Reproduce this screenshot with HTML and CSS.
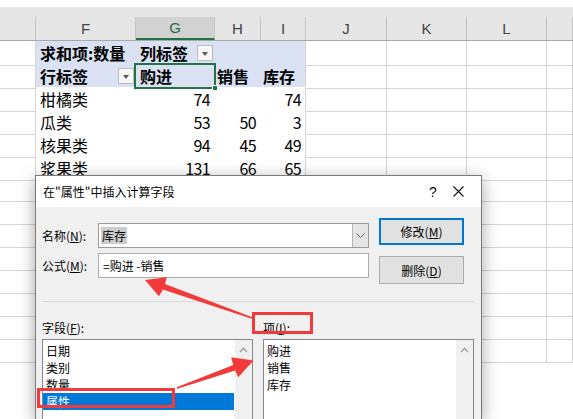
FILE: index.html
```html
<!DOCTYPE html>
<html lang="zh-CN">
<head>
<meta charset="utf-8">
<title>插入计算字段</title>
<link rel="stylesheet" href="styles.css">
</head>
<body>
<div class="sheet">
  <div class="topstrip"></div>
  <div class="colhead">
    <div class="h"></div><div class="h">F</div><div class="h sel">G</div><div class="h">H</div><div class="h">I</div><div class="h">J</div><div class="h">K</div><div class="h">L</div><div class="h"></div>
  </div>
  <div class="row">
    <div class="c"></div>
    <div class="c ph b">求和项:数量</div>
    <div class="c ph b dd-cell">列标签<span class="dd"></span></div>
    <div class="c ph"></div>
    <div class="c ph ri"></div>
    <div class="c"></div><div class="c"></div><div class="c"></div><div class="c"></div>
  </div>
  <div class="row">
    <div class="c"></div>
    <div class="c ph b bl dd-cell">行标签<span class="dd"></span></div>
    <div class="c ph b bl">购进</div>
    <div class="c ph b bl sh">销售</div>
    <div class="c ph b bl ri sh">库存</div>
    <div class="c"></div><div class="c"></div><div class="c"></div><div class="c"></div>
  </div>
  <div class="row">
    <div class="c"></div>
    <div class="c p">柑橘类</div><div class="c p n">74</div><div class="c p n"></div><div class="c p n ri">74</div>
    <div class="c"></div><div class="c"></div><div class="c"></div><div class="c"></div>
  </div>
  <div class="row">
    <div class="c"></div>
    <div class="c p">瓜类</div><div class="c p n">53</div><div class="c p n">50</div><div class="c p n ri">3</div>
    <div class="c"></div><div class="c"></div><div class="c"></div><div class="c"></div>
  </div>
  <div class="row">
    <div class="c"></div>
    <div class="c p">核果类</div><div class="c p n">94</div><div class="c p n">45</div><div class="c p n ri">49</div>
    <div class="c"></div><div class="c"></div><div class="c"></div><div class="c"></div>
  </div>
  <div class="row">
    <div class="c"></div>
    <div class="c p">浆果类</div><div class="c p n">131</div><div class="c p n">66</div><div class="c p n ri">65</div>
    <div class="c"></div><div class="c"></div><div class="c"></div><div class="c"></div>
  </div>
  <div class="row"><div class="c"></div><div class="c"></div><div class="c"></div><div class="c"></div><div class="c"></div><div class="c"></div><div class="c"></div><div class="c"></div><div class="c"></div></div>
  <div class="row"><div class="c"></div><div class="c"></div><div class="c"></div><div class="c"></div><div class="c"></div><div class="c"></div><div class="c"></div><div class="c"></div><div class="c"></div></div>
  <div class="row"><div class="c"></div><div class="c"></div><div class="c"></div><div class="c"></div><div class="c"></div><div class="c"></div><div class="c"></div><div class="c"></div><div class="c"></div></div>
  <div class="row"><div class="c"></div><div class="c"></div><div class="c"></div><div class="c"></div><div class="c"></div><div class="c"></div><div class="c"></div><div class="c"></div><div class="c"></div></div>
  <div class="row"><div class="c"></div><div class="c"></div><div class="c"></div><div class="c"></div><div class="c"></div><div class="c"></div><div class="c"></div><div class="c"></div><div class="c"></div></div>
  <div class="row"><div class="c"></div><div class="c"></div><div class="c"></div><div class="c"></div><div class="c"></div><div class="c"></div><div class="c"></div><div class="c"></div><div class="c"></div></div>
  <div class="row"><div class="c"></div><div class="c"></div><div class="c"></div><div class="c"></div><div class="c"></div><div class="c"></div><div class="c"></div><div class="c"></div><div class="c"></div></div>
  <div class="row"><div class="c"></div><div class="c"></div><div class="c"></div><div class="c"></div><div class="c"></div><div class="c"></div><div class="c"></div><div class="c"></div><div class="c"></div></div>
</div>
<div class="selbox"></div>
<div class="selhandle"></div>

<div class="dlg">
  <div class="title">
    <span class="tt">在"属性"中插入计算字段</span>
    <span class="q">?</span>
    <span class="x"><svg width="11" height="11" viewBox="0 0 11 11"><path d="M0.5 0.5 L10.5 10.5 M10.5 0.5 L0.5 10.5" stroke="#111" stroke-width="1.1" fill="none"/></svg></span>
  </div>
  <div class="body">
    <div class="top">
      <div class="fields">
        <div class="frow">
          <span class="lbl">名称(<u>N</u>):</span>
          <div class="combo"><span class="ctext"><span class="hl">库存</span></span><span class="cdrop"><svg width="9" height="5" viewBox="0 0 9 5"><path d="M0.5 0.5 L4.5 4.5 L8.5 0.5" stroke="#606060" stroke-width="1" fill="none"/></svg></span></div>
        </div>
        <div class="frow">
          <span class="lbl">公式(<u>M</u>):</span>
          <div class="input">=购进 -销售</div>
        </div>
      </div>
      <div class="btns">
        <div class="btn primary">修改(<u>M</u>)</div>
        <div class="btn second">删除(<u>D</u>)</div>
      </div>
    </div>
    <div class="sep"></div>
    <div class="lblrow">
      <span class="l1">字段(<u>F</u>):</span>
      <span class="l2">项(<u>I</u>):</span>
    </div>
    <div class="lists">
      <div class="list">
        <div class="items">
          <div class="it">日期</div>
          <div class="it">类别</div>
          <div class="it">数量</div>
          <div class="it on">属性</div>
        </div>
        <div class="sb"><svg width="9" height="6" viewBox="0 0 9 6"><path d="M1 5 L4.5 1.5 L8 5" stroke="#a6a6a6" stroke-width="1.6" fill="none"/></svg></div>
      </div>
      <div class="list">
        <div class="items">
          <div class="it">购进</div>
          <div class="it">销售</div>
          <div class="it">库存</div>
        </div>
        <div class="sb"><svg width="9" height="6" viewBox="0 0 9 6"><path d="M1 5 L4.5 1.5 L8 5" stroke="#a6a6a6" stroke-width="1.6" fill="none"/></svg></div>
      </div>
    </div>
  </div>
</div>

<svg class="annot" width="573" height="419" viewBox="0 0 573 419">
  <rect x="253.5" y="313.5" width="58" height="19" fill="none" stroke="#f23a3a" stroke-width="3"/>
  <rect x="38.5" y="389.5" width="135" height="17" fill="none" stroke="#f23a3a" stroke-width="3"/>
  <polygon fill="#f23a3a" points="145,280 166.9,277.2 164.9,283.9 252.3,317.2 251.7,318.8 162.9,289.5 158.9,296.2"/>
  <polygon fill="#f23a3a" points="253.5,360.5 231.2,357.2 233.2,364.9 176.7,387.2 177.3,388.8 235.2,370.5 238.2,377.2"/>
</svg>
</body>
</html>
```
FILE: styles.css
```css
* { box-sizing: border-box; }
html, body { overflow: hidden; }
body {
  margin: 0;
  width: 573px;
  height: 419px;
  position: relative;
  background: #fff;
  font-family: "Noto Sans CJK SC", "Noto Sans", sans-serif;
  color: #000;
}
.sheet {
  --cols: 36px 100px 79px 46px 45px 81px 80px 80px 26px;
  height: 419px;
  overflow: hidden;
}
.topstrip { height: 8px; border-bottom: 1px solid #d0d0d0; }
.colhead {
  display: grid;
  grid-template-columns: var(--cols);
  height: 34px;
  padding-top: 10px;
  background: #e6e6e6;
  border-bottom: 1px solid #a9a9a9;
  margin-top: -1px;
}
.colhead .h {
  border-right: 1px solid #c4c4c4;
  display: flex;
  align-items: center;
  justify-content: center;
  font: 15px "Liberation Sans", sans-serif;
  color: #444;
}
.colhead .h.sel {
  background: #d2d2d2;
  color: #1e6b41;
  border-bottom: 2px solid #217346;
}
.row {
  display: grid;
  grid-template-columns: var(--cols);
  height: 23px;
}
.c {
  border-right: 1px solid #d4d4d4;
  border-bottom: 1px solid #d4d4d4;
  display: flex;
  align-items: center;
  padding: 0 4px;
  font-size: 16px;
  white-space: nowrap;
  min-width: 0;
}
.p { background: #fff; border-color: #fff; }
.ph { background: #d9e1f2; border-color: #d9e1f2; }
.ph.bl { border-bottom-color: #9bb3df; }
.ri { border-right-color: #d4d4d4; }
.b { font-weight: bold; }
.sh { padding-left: 2px; }
.n { justify-content: flex-end; letter-spacing: -0.6px; }
.dd-cell { padding-right: 1px; }
.dd {
  margin-left: auto;
  width: 16px;
  height: 16px;
  background: #f7f7f7;
  border: 1px solid #bcbcbc;
  position: relative;
}
.dd::after {
  content: "";
  position: absolute;
  left: 4px;
  top: 6px;
  border-left: 3.5px solid transparent;
  border-right: 3.5px solid transparent;
  border-top: 4px solid #5a5a5a;
}
.selbox {
  position: absolute;
  left: 134px;
  top: 63px;
  width: 82px;
  height: 26px;
  border: 2px solid #217346;
}
.selhandle {
  position: absolute;
  left: 212px;
  top: 85px;
  width: 6px;
  height: 6px;
  background: #217346;
  border: 1px solid #fff;
}

/* dialog */
.dlg {
  position: absolute;
  left: 35px;
  top: 175px;
  width: 447px;
  height: 244px;
  overflow: hidden;
  border: 1px solid #7a7a7a;
  border-bottom: none;
  background: #f0f0f0;
  box-shadow: 0 4px 16px rgba(0,0,0,0.35);
  font-size: 12px;
}
.title {
  height: 31px;
  background: #fff;
  display: flex;
  align-items: center;
  padding-left: 7px;
  padding-right: 8px;
}
.tt { flex: 1; }
.q {
  width: 20px;
  text-align: center;
  font: 14px "Liberation Sans", sans-serif;
  color: #111;
}
.x {
  width: 30px;
  display: flex;
  justify-content: center;
}
.top {
  display: flex;
  padding-top: 11px;
  padding-left: 6px;
}
.fields {
  margin-top: 5px;
  display: flex;
  flex-direction: column;
  gap: 5px;
}
.frow { display: flex; align-items: center; }
.lbl { width: 56px; }
.combo {
  width: 271px;
  height: 25px;
  border: 1px solid #9a9a9a;
  background: #fff;
  display: flex;
}
.ctext { flex: 1; display: flex; align-items: center; padding-left: 2px; }
.hl { background: #cccccc; padding: 0 1px; line-height: 17px; }
.cdrop {
  width: 16px;
  background: #e5e5e5;
  border-left: 1px solid #b5b5b5;
  display: flex;
  align-items: center;
  justify-content: center;
}
.input {
  width: 271px;
  height: 25px;
  border: 1px solid #adadad;
  background: #fff;
  display: flex;
  align-items: center;
  padding-left: 4px;
}
.btns {
  margin-left: 10px;
  display: flex;
  flex-direction: column;
  gap: 11px;
}
.btn {
  width: 85px;
  background: #e1e1e1;
  border: 1px solid #adadad;
  display: flex;
  align-items: center;
  justify-content: center;
}
.btn.primary { height: 27px; border: 2px solid #0078d7; }
.btn.second { height: 28px; }
.sep {
  height: 1px;
  background: #d9d9d9;
  margin: 17px 7px 0 6px;
}
.lblrow {
  display: flex;
  margin-top: 17px;
  padding-left: 6px;
  height: 16px;
  align-items: center;
}
.l1 { width: 221px; }
.lists {
  display: flex;
  gap: 10px;
  margin-top: 4px;
  padding-left: 6px;
}
.list {
  width: 211px;
  height: 90px;
  border: 1px solid #828790;
  border-bottom: none;
  background: #fff;
  display: flex;
}
.items { flex: 1; padding-top: 2px; }
.it { height: 17px; line-height: 17px; padding-left: 3px; }
.it.on { background: #0078d7; color: #fff; }
.sb {
  width: 17px;
  margin-left: 1px;
  background: #f0f0f0;
  display: flex;
  justify-content: center;
  align-items: flex-start;
  padding-top: 7px;
}
.annot {
  position: absolute;
  left: 0;
  top: 0;
  pointer-events: none;
}
```
